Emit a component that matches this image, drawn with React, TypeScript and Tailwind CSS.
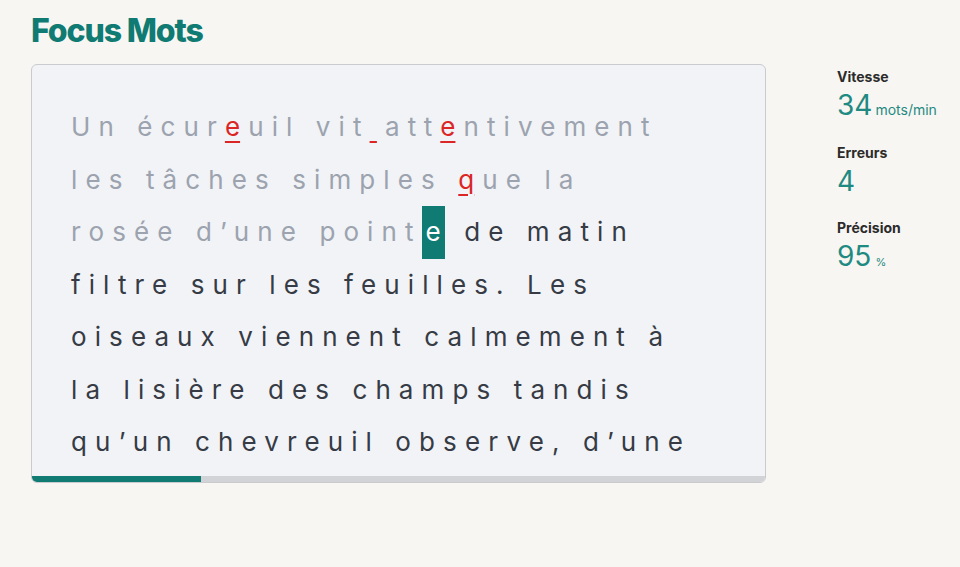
import React from "react";

type Seg = { t: string; k: "done" | "err" | "errsp" | "cur" | "todo" };

const lines: Seg[][] = [
  [
    { t: "Un écur", k: "done" },
    { t: "e", k: "err" },
    { t: "uil vit", k: "done" },
    { t: " ", k: "errsp" },
    { t: "att", k: "done" },
    { t: "e", k: "err" },
    { t: "ntivement", k: "done" },
  ],
  [
    { t: "les tâches simples ", k: "done" },
    { t: "q", k: "err" },
    { t: "ue la", k: "done" },
  ],
  [
    { t: "rosée d’une point", k: "done" },
    { t: "e", k: "cur" },
    { t: " de matin", k: "todo" },
  ],
  [{ t: "filtre sur les feuilles. Les", k: "todo" }],
  [{ t: "oiseaux viennent calmement à", k: "todo" }],
  [{ t: "la lisière des champs tandis", k: "todo" }],
  [{ t: "qu’un chevreuil observe, d’une", k: "todo" }],
];

function SegView({ s }: { s: Seg }) {
  if (s.k === "done") return <span className="text-[#9ca3af]">{s.t}</span>;
  if (s.k === "todo") return <span className="text-[#363b45]">{s.t}</span>;
  if (s.k === "cur")
    return (
      <span className="inline-block bg-[#0f7b73] text-white h-[53px] leading-[52px] align-top tracking-normal px-[4px] mr-[4px]">
        {s.t}
      </span>
    );
  return (
    <span className="text-[#dc2626] tracking-normal mr-[8.1px] underline decoration-[#dc2626] decoration-2 underline-offset-[5px]">
      {s.t}
    </span>
  );
}

export default function App() {
  return (
    <div className="min-h-screen w-full bg-[#f8f6f2] font-['Inter','Noto_Sans',sans-serif]">
      <div className="pl-[31px] pt-[11px]">
        <h1 className="text-[32px] leading-[40px] font-extrabold text-[#0f7b73] tracking-[-0.035em]">Focus Mots</h1>
        <div className="mt-[13px] flex items-start">
          <div className="w-[735px] h-[419px] rounded-[6px] border border-[#c9cbcf] bg-[#f1f3f6] overflow-hidden flex flex-col">
            <div className="flex-1 overflow-hidden px-[39px] pt-[36px]">
              <div className="text-[26px] leading-[52.5px] tracking-[8.1px] whitespace-pre">
                {lines.map((ln, i) => (
                  <div key={i} className="h-[52.5px]">
                    {ln.map((s, j) => (
                      <SegView key={j} s={s} />
                    ))}
                  </div>
                ))}
              </div>
            </div>
            <div className="h-[6px] w-full bg-[#d1d3d7] flex">
              <div className="h-full w-[23%] bg-[#0f7b73]" />
            </div>
          </div>
          <div className="ml-[71px] pt-[3px] flex flex-col gap-[15px]">
            <div>
              <div className="text-[14px] leading-[20px] font-bold text-[#2b2b2b]">Vitesse</div>
              <div className="text-[#1e8a82] leading-[36px]">
                <span className="text-[28px]">34</span>
                <span className="text-[14px] ml-[3px]">mots/min</span>
              </div>
            </div>
            <div>
              <div className="text-[14px] leading-[20px] font-bold text-[#2b2b2b]">Erreurs</div>
              <div className="text-[#1e8a82] leading-[36px]">
                <span className="text-[28px]">4</span>
              </div>
            </div>
            <div>
              <div className="text-[14px] leading-[20px] font-bold text-[#2b2b2b]">Précision</div>
              <div className="text-[#1e8a82] leading-[36px]">
                <span className="text-[28px]">95</span>
                <span className="text-[11px] ml-[4px]">%</span>
              </div>
            </div>
          </div>
        </div>
      </div>
    </div>
  );
}
